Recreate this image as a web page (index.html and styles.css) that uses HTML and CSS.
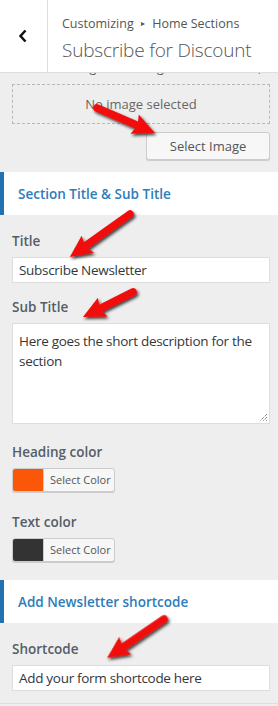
FILE: index.html
```html
<!DOCTYPE html>
<html>
<head>
<meta charset="utf-8">
<link rel="stylesheet" href="styles.css">
</head>
<body>
<div class="panel">
  <header class="head">
    <button class="back" aria-label="Back">
      <svg width="10" height="14" viewBox="0 0 10 14"><path d="M7.5 1.5 L2.5 7 L7.5 12.5" fill="none" stroke="#111" stroke-width="2.5"/></svg>
    </button>
    <div class="titles">
      <div class="crumb">Customizing <span class="tri">▸</span> Home Sections</div>
      <div class="title">Subscribe for Discount</div>
    </div>
  </header>

  <div class="body">
    <div class="clip"><span>Background image for the section, recommended 1920 x 700 px</span></div>
    <div class="imgbox">No image selected</div>
    <div class="btnrow"><button class="btn">Select Image</button></div>
  </div>

  <div class="sechead">Section Title &amp; Sub Title</div>

  <div class="body sec">
    <div class="ctl ctl-text">
      <div class="lbl">Title</div>
      <div class="input">Subscribe Newsletter</div>
    </div>
    <div class="ctl ctl-area">
      <div class="lbl">Sub Title</div>
      <div class="area">Here goes the short description for the section
        <svg class="grip" width="9" height="9" viewBox="0 0 9 9"><path d="M8 1 L1 8 M8 4 L4 8 M8 7 L7 8" stroke="#555" stroke-width="1" stroke-dasharray="1 1" fill="none"/></svg>
      </div>
    </div>
    <div class="ctl ctl-color">
      <div class="lbl">Heading color</div>
      <div class="colorbtn"><span class="sw orange"></span><span class="ctext">Select Color</span></div>
    </div>
    <div class="ctl ctl-color2">
      <div class="lbl">Text color</div>
      <div class="colorbtn"><span class="sw dark"></span><span class="ctext">Select Color</span></div>
    </div>
  </div>

  <div class="sechead">Add Newsletter shortcode</div>

  <div class="body sec last">
    <div class="ctl">
      <div class="lbl">Shortcode</div>
      <div class="input">Add your form shortcode here</div>
    </div>
  </div>
  <div class="tail"></div>

  <svg class="arrows" width="278" height="706" viewBox="0 0 278 706">
    <defs>
      <filter id="sh" x="-30%" y="-30%" width="160%" height="160%">
        <feDropShadow dx="1.5" dy="2" stdDeviation="1.6" flood-color="#000" flood-opacity="0.75"/>
      </filter>
    </defs>
    <g filter="url(#sh)" fill="#f20c0c">
      <g transform="translate(97,108) rotate(23.3)"><path d="M0,-3.8 L43,-3.8 L41,-10.5 L63,0 L41,10.5 L43,3.8 L0,3.8 A3.8,3.8 0 0 1 0,-3.8Z"/></g>
      <g transform="translate(130,214) rotate(144.4)"><path d="M0,-3.8 L54,-3.8 L52,-10.5 L74,0 L52,10.5 L54,3.8 L0,3.8 A3.8,3.8 0 0 1 0,-3.8Z"/></g>
      <g transform="translate(133,292) rotate(153.4)"><path d="M0,-3.8 L36,-3.8 L34,-10.5 L56,0 L34,10.5 L36,3.8 L0,3.8 A3.8,3.8 0 0 1 0,-3.8Z"/></g>
      <g transform="translate(164,619) rotate(145.6)"><path d="M0,-3.8 L49,-3.8 L47,-10.5 L69,0 L47,10.5 L49,3.8 L0,3.8 A3.8,3.8 0 0 1 0,-3.8Z"/></g>
    </g>
  </svg>
</div>
</body>
</html>
```
FILE: styles.css
```css
* { box-sizing: border-box; }
html, body { margin: 0; padding: 0; }
body {
  width: 278px;
  height: 706px;
  overflow: hidden;
  background: #eee;
  font-family: "Open Sans", "Noto Sans", sans-serif;
  color: #555;
}
.panel { position: relative; width: 278px; }

.head {
  display: flex;
  height: 73px;
  background: #fff;
  border-bottom: 1px solid #ddd;
}
.back {
  width: 48px;
  flex: none;
  border: 0;
  border-right: 1px solid #ddd;
  background: #fff;
  display: flex;
  align-items: center;
  justify-content: center;
  padding: 0 2px 0 0;
}
.titles { padding: 14px 0 0 14px; }
.crumb {
  font-size: 12.5px;
  line-height: 18px;
  color: #555;
}
.tri { font-size: 8px; vertical-align: 2px; margin: 0 4px; }
.title {
  font-size: 19px;
  font-weight: 300;
  line-height: 26px;
  margin-top: 4px;
  color: #555;
  letter-spacing: -0.2px;
}

.body { padding: 0 8px 12px 12px; }
.clip {
  height: 5px;
  overflow: hidden;
  font-size: 12.5px;
  line-height: 5px;
  color: #555;
}
.clip span {
  display: block;
  margin-top: -11px;
  white-space: nowrap;
  padding-left: 50px;
  line-height: 12px;
}
.imgbox {
  margin-top: 6px;
  height: 40px;
  border: 1px dashed #b4b9be;
  display: flex;
  align-items: center;
  justify-content: center;
  font-size: 13px;
  color: #666;
}
.btnrow { display: flex; justify-content: flex-end; margin-top: 8px; }
.btn {
  width: 124px;
  height: 28px;
  border: 1px solid #ccc;
  border-radius: 3px;
  background: #f7f7f7;
  box-shadow: 0 1px 0 #ccc;
  font-family: inherit;
  font-size: 13px;
  color: #555;
  padding: 0;
}

.sechead {
  height: 43px;
  background: #fff;
  border-left: 4px solid #2271b1;
  padding-left: 14px;
  display: flex;
  align-items: center;
  font-size: 13.5px;
  font-weight: 600;
  color: #2e7cb8;
}

.sec { padding-top: 18px; padding-bottom: 17px; }
.sec.last { padding-bottom: 12px; }
.ctl { margin-bottom: 16px; }
.ctl-area { margin-bottom: 20px; }
.ctl-color { margin-bottom: 22px; }
.ctl-color2 { margin-bottom: 1px; }
.sec.last .ctl { margin-bottom: 0; }
.lbl {
  font-size: 13.5px;
  font-weight: 600;
  line-height: 16px;
  color: #555d66;
  margin-bottom: 8px;
}
.input, .area {
  background: #fff;
  border: 1px solid #ddd;
  font-size: 13.5px;
  letter-spacing: -0.3px;
  color: #32373c;
  padding: 0 6px;
}
.input { height: 26px; line-height: 24px; }
.area {
  position: relative;
  height: 101px;
  line-height: 20px;
  padding-top: 7px;
}
.grip { position: absolute; right: 1px; bottom: 1px; }

.colorbtn {
  display: flex;
  width: 103px;
  height: 24px;
  border: 1px solid #ccc;
  border-radius: 3px;
  background: #f7f7f7;
  box-shadow: 0 1px 0 #ccc;
  overflow: hidden;
}
.sw { width: 31px; flex: none; border-right: 1px solid #ccc; }
.orange { background: #fb5709; }
.dark { background: #333; }
.ctext {
  font-size: 11px;
  line-height: 22px;
  color: #555;
  padding-left: 6px;
}

.tail { border-top: 1px solid #ddd; height: 4px; }

.arrows { position: absolute; left: 0; top: 0; pointer-events: none; }
```
